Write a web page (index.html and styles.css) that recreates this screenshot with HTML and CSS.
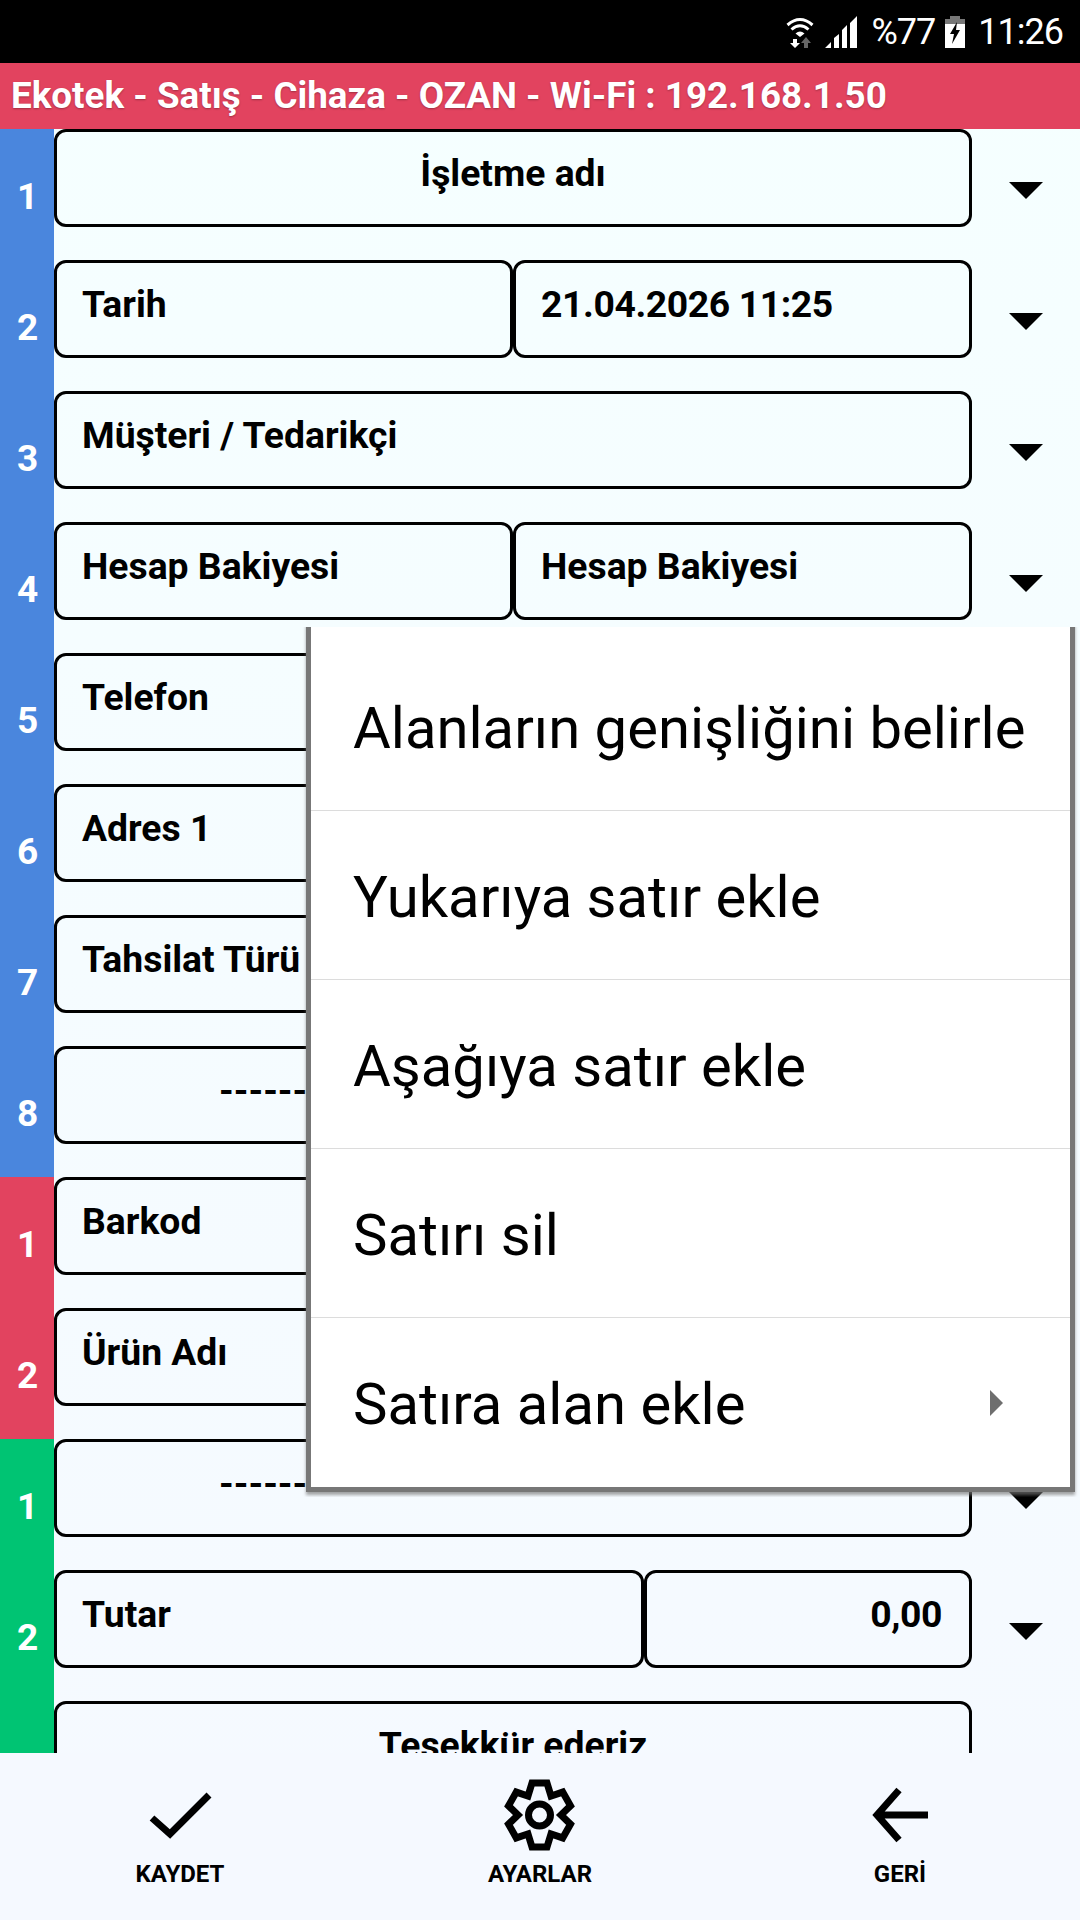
FILE: index.html
```html
<!DOCTYPE html>
<html>

<head>
  <title>Ekotek</title>
  <link rel="stylesheet" href="styles.css">
</head>

<body>
  <div class="status-bar">
    <svg class="wifi-icon" width="28" height="32" viewBox="0 0 28 32">
      <path d="M1.5 9 Q14 -2 26.5 9" fill="none" stroke="#fff" stroke-width="3" />
      <path d="M5.5 13.5 Q14 6 22.5 13.5" fill="none" stroke="#fff" stroke-width="3" />
      <path d="M9.500 17.500 Q14 13.500 18.500 17.500 L14 21 Z" fill="#fff" />
      <path d="M7 23 h4 v4 h3 l-5 5 l-5 -5 h3 Z" fill="#fff" />
      <path d="M18 32 v-5 h-3 l5 -6 l5 6 h-3 v5 Z" fill="#666" />
    </svg>
    <svg class="signal-icon" width="32" height="32" viewBox="0 0 32 32">
      <path d="M0 32 L6 26 V32 Z M9 32 V22 L14 18 V32 Z M17 32 V14 L22 9 V32 Z M25 32 V7 L32 0 V32 Z" fill="#fff" />
    </svg>
    <span class="status-text battery-text">%77</span>
    <svg class="battery-icon" width="20" height="32" viewBox="0 0 20 32">
      <path d="M5 0 H15 V3 H20 V32 H0 V3 H5 Z" fill="#777" />
      <path d="M0 8 H20 V32 H0 Z" fill="#fff" />
      <path d="M12 6 L5 18 H9 L7 28 L15 14 H11 Z" fill="#000" />
    </svg>
    <span class="status-text">11:26</span>
  </div>

  <div class="title-bar">Ekotek - Satış - Cihaza - OZAN - Wi-Fi : 192.168.1.50</div>

  <div class="rows">
    <div class="row blue">
      <div class="row-num">1</div>
      <div class="cells"><div class="cell center">İşletme adı</div></div>
      <div class="arrow"></div>
    </div>
    <div class="row blue">
      <div class="row-num">2</div>
      <div class="cells"><div class="cell">Tarih</div><div class="cell digits">21.04.2026 11:25</div></div>
      <div class="arrow"></div>
    </div>
    <div class="row blue">
      <div class="row-num">3</div>
      <div class="cells"><div class="cell">Müşteri / Tedarikçi</div></div>
      <div class="arrow"></div>
    </div>
    <div class="row blue">
      <div class="row-num">4</div>
      <div class="cells"><div class="cell">Hesap Bakiyesi</div><div class="cell">Hesap Bakiyesi</div></div>
      <div class="arrow"></div>
    </div>
    <div class="row blue">
      <div class="row-num">5</div>
      <div class="cells"><div class="cell">Telefon</div></div>
      <div class="arrow"></div>
    </div>
    <div class="row blue">
      <div class="row-num">6</div>
      <div class="cells"><div class="cell">Adres 1</div></div>
      <div class="arrow"></div>
    </div>
    <div class="row blue">
      <div class="row-num">7</div>
      <div class="cells"><div class="cell">Tahsilat Türü</div></div>
      <div class="arrow"></div>
    </div>
    <div class="row blue">
      <div class="row-num">8</div>
      <div class="cells"><div class="cell center">----------------------------------------</div></div>
      <div class="arrow"></div>
    </div>
    <div class="row red">
      <div class="row-num">1</div>
      <div class="cells"><div class="cell">Barkod</div></div>
      <div class="arrow"></div>
    </div>
    <div class="row red">
      <div class="row-num">2</div>
      <div class="cells"><div class="cell">Ürün Adı</div></div>
      <div class="arrow"></div>
    </div>
    <div class="row green">
      <div class="row-num">1</div>
      <div class="cells"><div class="cell center">----------------------------------------</div></div>
      <div class="arrow"></div>
    </div>
    <div class="row green">
      <div class="row-num">2</div>
      <div class="cells">
        <div class="cell wide">Tutar</div>
        <div class="cell narrow right digits">0,00</div>
      </div>
      <div class="arrow"></div>
    </div>
    <div class="row green">
      <div class="row-num"></div>
      <div class="cells"><div class="cell center">Teşekkür ederiz</div></div>
      <div class="arrow"></div>
    </div>
  </div>

  <div class="popup-menu">
    <div class="menu-item first">Alanların genişliğini belirle</div>
    <div class="menu-item">Yukarıya satır ekle</div>
    <div class="menu-item">Aşağıya satır ekle</div>
    <div class="menu-item">Satırı sil</div>
    <div class="menu-item">Satıra alan ekle<span class="submenu-arrow"></span></div>
  </div>

  <div class="bottom-bar">
    <div class="bottom-btn">
      <svg class="bottom-icon" width="80" height="80" viewBox="0 0 80 80">
        <path d="M12 43 L30 59 L69 20" fill="none" stroke="#000" stroke-width="7" />
      </svg>
      <span>KAYDET</span>
    </div>
    <div class="bottom-btn">
      <svg class="bottom-icon" width="80" height="80" viewBox="0 0 80 80">
        <path d="M32 8 H47 L51 21 L62.700 17.100 L70.500 30.900 L61 40 L70.500 49.100 L62.700 62.900 L51 59 L47 72 H32 L28 59 L16.300 62.900 L8.500 49.100 L18 40 L8.500 30.900 L16.300 17.100 L28 21 Z" fill="none" stroke="#000" stroke-width="7" />
        <circle cx="39.500" cy="40" r="11" fill="none" stroke="#000" stroke-width="7" />
      </svg>
      <span>AYARLAR</span>
    </div>
    <div class="bottom-btn">
      <svg class="bottom-icon" width="80" height="80" viewBox="0 0 80 80">
        <path d="M39 15 L17 40 L39 65 M17 40 H68" fill="none" stroke="#000" stroke-width="7" />
      </svg>
      <span>GERİ</span>
    </div>
  </div>
</body>

</html>
```
FILE: styles.css
```css
* {
  box-sizing: border-box;
}

html,
body {
  margin: 0;
  height: 100%;
}

body {
  position: relative;
  display: flex;
  flex-direction: column;
  height: 1920px;
  overflow: hidden;
  background-image: linear-gradient(#f5ffff, #f5f9ff);
  color: #000;
  font-family: Roboto, "Liberation Sans", sans-serif;
}

.status-bar {
  display: flex;
  align-items: center;
  justify-content: flex-end;
  height: 63px;
  padding-right: 17px;
  background-color: #000;
  color: #fff;
}

.status-text {
  font-size: 36px;
  letter-spacing: -1px;
}

.wifi-icon {
  margin-right: 11px;
}

.signal-icon {
  margin-right: 15px;
}

.battery-icon {
  margin: 0 13px 0 10px;
}

.title-bar {
  height: 66px;
  padding-left: 11px;
  background-color: #e2435f;
  color: #fff;
  font-size: 36.800px;
  font-weight: 700;
  line-height: 66px;
  white-space: nowrap;
  text-shadow: 0 1px 2px #0000004d;
}

.rows {
  flex: 1;
  min-height: 0;
  overflow: hidden;
}

.row {
  display: flex;
  height: 131px;
}

.row-num {
  display: flex;
  align-items: center;
  justify-content: center;
  width: 54px;
  padding: 4px 0 0 1px;
  color: #fff;
  font-size: 37px;
  font-weight: 700;
}

.blue .row-num {
  background-color: #4a86dd;
}

.red .row-num {
  background-color: #e2435f;
}

.green .row-num {
  background-color: #00c473;
}

.cells {
  display: flex;
  width: 918px;
  height: 98px;
}

.cell {
  flex: 1;
  height: 98px;
  padding: 19px 25px 0;
  border: 3px solid #000;
  border-radius: 12px;
  font-size: 37.300px;
  font-weight: 700;
  line-height: 44px;
  white-space: nowrap;
  overflow: hidden;
}

.cell.center {
  text-align: center;
}

.cell.right {
  padding-right: 27px;
  text-align: right;
}

.cell.digits {
  letter-spacing: -0.4px;
}

.cell.wide {
  flex: 0 0 590px;
}

.cell.narrow {
  flex: 1;
}

.arrow {
  width: 0;
  height: 0;
  margin: 53px 0 0 37px;
  border-top: 17px solid #000;
  border-left: 17px solid transparent;
  border-right: 17px solid transparent;
}

.popup-menu {
  position: absolute;
  top: 627px;
  left: 311px;
  width: 759px;
  background-color: #fff;
  box-shadow: 0 0 0 5px #777, 0 3px 3px 5px #777777aa;
  clip-path: inset(0 -10px -10px -10px);
}

.menu-item {
  position: relative;
  height: 169px;
  padding-left: 42px;
  border-bottom: 1px solid #dcdcdc;
  font-size: 58px;
  line-height: 172px;
}

.menu-item.first {
  height: 184px;
  padding-top: 15px;
}

.menu-item:last-child {
  border-bottom: none;
}

.submenu-arrow {
  position: absolute;
  top: 72px;
  right: 67px;
  width: 0;
  height: 0;
  border-left: 13px solid #6e6e6e;
  border-top: 13px solid transparent;
  border-bottom: 13px solid transparent;
}

.bottom-bar {
  display: flex;
  height: 167px;
  padding: 22px 0 0;
  background-color: #f5f9ff;
}

.bottom-btn {
  flex: 1;
  display: flex;
  flex-direction: column;
  align-items: center;
  font-size: 24px;
  font-weight: 700;
}

.bottom-icon {
  margin-bottom: 5px;
}
```
